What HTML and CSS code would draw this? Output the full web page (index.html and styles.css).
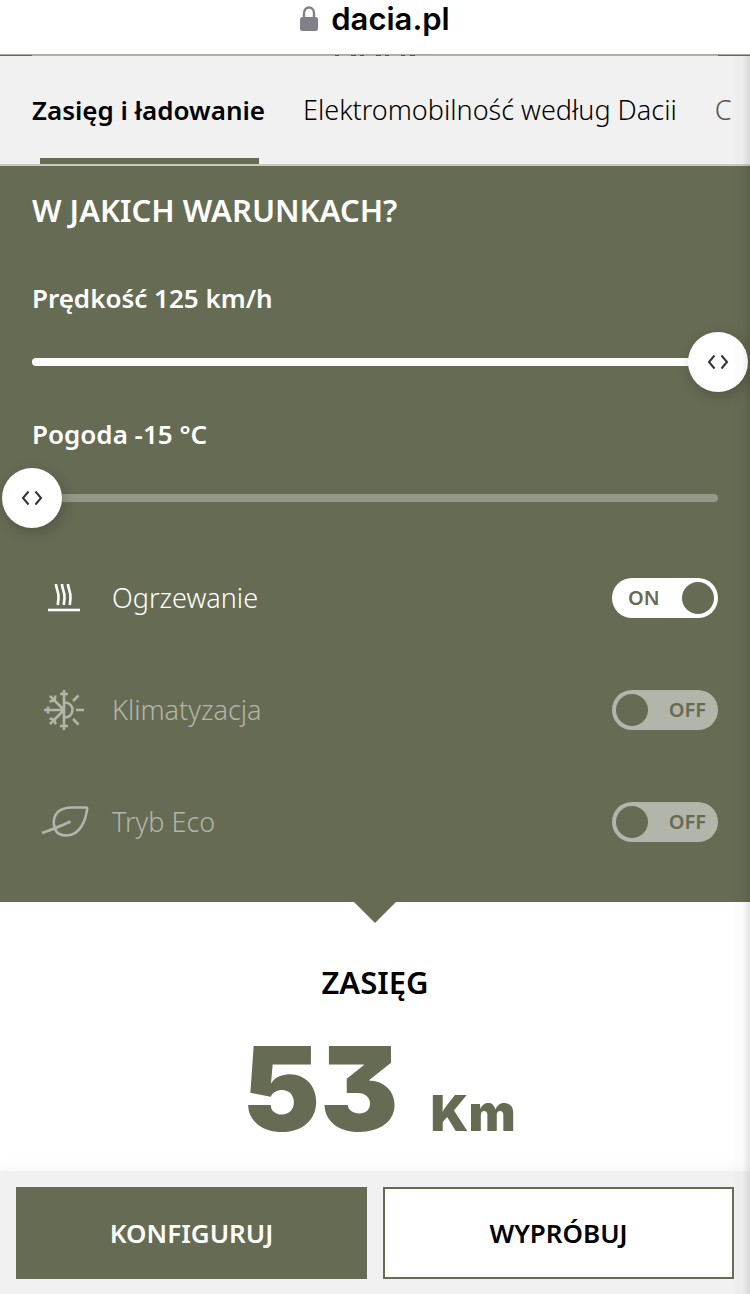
FILE: index.html
```html
<!DOCTYPE html>
<html lang="pl">
  <head>
    <meta charset="UTF-8" />
    <meta name="viewport" content="width=device-width, initial-scale=1.0" />
    <title>Dacia - Zasięg i ładowanie</title>
    <link rel="stylesheet" href="styles.css">
  </head>
  <body>
    <header class="address-bar">
      <svg class="lock" width="18" height="26" viewBox="0 0 18 26" aria-hidden="true">
        <path d="M4 13V7a5 5.500 0 0 1 10 0V13" fill="none" stroke="#818086" stroke-width="2.400" />
        <rect y="11" width="18" height="14" rx="2.500" fill="#818086" />
      </svg>
      <span>dacia.pl</span>
    </header>

    <div class="page-edge">
      <svg width="80" height="1" viewBox="0 0 80 1" aria-hidden="true">
        <path d="M0 .5h4M16 .5h5M25 .5h4M41 .5h5M50 .5h4M66 .5h4M75 .5h5" stroke="#55564e" />
      </svg>
    </div>

    <nav class="tabs">
      <a href="#zasieg" class="tab active">Zasięg i ładowanie</a>
      <a href="#elektromobilnosc" class="tab">Elektromobilność według Dacii</a>
      <a href="#c" class="tab faded">C</a>
    </nav>

    <main class="simulator" id="zasieg">
      <section class="conditions">
        <h2 class="title">W JAKICH WARUNKACH?</h2>

        <div class="field">
          <label for="speed">Prędkość 125 km/h</label>
          <div class="slider full">
            <input type="range" id="speed" min="0" max="125" value="125" />
          </div>
        </div>

        <div class="field">
          <label for="weather">Pogoda -15 °C</label>
          <div class="slider">
            <input type="range" id="weather" min="-15" max="35" value="-15" />
          </div>
        </div>

        <div class="options">
          <label class="option on">
            <svg class="icon" viewBox="0 0 64 64" aria-hidden="true">
              <path d="M24 18c0 5.500 3 7 2.500 14l-.7 7M30 18c0 5.500 3 7 2.500 14l-.7 7M36 18c0 5.500 3 7 2.500 14l-.7 7" />
              <path d="M16 44h32" />
            </svg>
            <span class="name">Ogrzewanie</span>
            <span class="switch">
              <input type="checkbox" checked />
              <span class="state">ON</span>
            </span>
          </label>

          <label class="option">
            <svg class="icon" viewBox="0 0 64 64" aria-hidden="true">
              <!-- snowflake half -->
              <path d="M32 12v40M12 32h20M18 18l14 14M18 46l14-14" />
              <path d="M28 16h8M28 48h8M16 28.500v7M17.500 23.500l5-1 1-5M17.500 40.500l5 1 1 5" />
              <!-- sun half -->
              <path d="M33 24.500a7.500 7.500 0 0 1 0 15M44 32h8M41 23l5.500-5.500M41 41l5.500 5.500" />
            </svg>
            <span class="name">Klimatyzacja</span>
            <span class="switch">
              <input type="checkbox" />
              <span class="state">OFF</span>
            </span>
          </label>

          <label class="option">
            <svg class="icon" viewBox="0 0 64 64" aria-hidden="true">
              <path d="M38.500 31.500C29 36 20 39.500 10 43" />
              <path d="M23 39c-3-9-1-21 16-21.500h15c.9 0 1.300.500 1.200 1.300C53.500 31 48 45 35 45.500c-6 0-10.500-2-12-6.500z" />
            </svg>
            <span class="name">Tryb Eco</span>
            <span class="switch">
              <input type="checkbox" />
              <span class="state">OFF</span>
            </span>
          </label>
        </div>
      </section>

      <section class="result">
        <h2 class="title">ZASIĘG</h2>
        <p class="range"><span class="value">53</span><span class="unit">Km</span></p>
      </section>
    </main>

    <footer class="actions">
      <button type="button" class="btn primary">KONFIGURUJ</button>
      <button type="button" class="btn">WYPRÓBUJ</button>
    </footer>
  </body>
</html>
```
FILE: styles.css
```css
* {
  box-sizing: border-box;
}

body {
  margin: 0;
  min-height: 100vh;
  display: flex;
  flex-direction: column;
  overflow-x: hidden;
  background: #fff;
  color: #000;
  font-family: "Noto Sans", "Open Sans", sans-serif;
  font-size: 27px;
  line-height: 40px;
}

/* shadow along the right side of the screen */
body::after {
  content: "";
  position: fixed;
  top: 56px;
  right: 0;
  bottom: 0;
  width: 18px;
  background: linear-gradient(to right, transparent, rgba(0, 0, 0, 0.02) 60%, rgba(0, 0, 0, 0.1));
  pointer-events: none;
}

.address-bar {
  display: flex;
  justify-content: center;
  align-items: center;
  gap: 13px;
  padding-bottom: 16px;
  border-bottom: 1px solid #a9a9a6;
  font-family: Inter, sans-serif;
  font-size: 31px;
  font-weight: 600;
  line-height: 38px;
}

.page-edge {
  display: flex;
  justify-content: center;
  height: 1px;
  background: linear-gradient(to right, #67645a 32px, #b0afa8 32px, #b0afa8 calc(100% - 32px), #67645a calc(100% - 32px));
}

.tabs {
  display: flex;
  gap: 38px;
  padding: 0 32px;
  background: #f1f1f1;
  border-bottom: 2px solid #c9cac2;
  white-space: nowrap;
  overflow: hidden;
}

.tab {
  padding: 34px 0 28px;
  color: #000;
  font-weight: 300;
  text-decoration: none;
}

.tab.active {
  font-size: 26px;
  font-weight: 600;
}

.tab.active::after {
  content: "";
  display: block;
  height: 6px;
  margin: 28px 6px -28px 8px;
  background: #666b54;
}

.tab.faded {
  color: #555;
}

.title {
  margin: 0;
  font-size: 31px;
  font-weight: 600;
}

.conditions {
  position: relative;
  padding: 24px 32px;
  background: #666b54;
  color: #fff;
}

.conditions::after {
  content: "";
  position: absolute;
  top: 100%;
  left: 50%;
  margin-left: -21px;
  border: 21px solid transparent;
  border-top-color: #666b54;
  border-bottom: 0;
}

.conditions .title {
  margin-bottom: 48px;
}

.field {
  font-size: 26px;
  font-weight: 600;
}

.field + .field {
  margin-top: 22px;
}

.field label {
  display: block;
  margin-bottom: 14px;
}

.slider {
  position: relative;
  height: 60px;
}

.slider::before {
  content: "";
  position: absolute;
  top: 26px;
  left: 0;
  right: 0;
  height: 8px;
  border-radius: 4px;
  background: #949887;
}

.slider.full::before {
  background: #fff;
}

/* the thumb centre has to reach both ends of the track */
.slider input {
  position: relative;
  display: block;
  width: calc(100% + 60px);
  height: 60px;
  margin: 0 -30px;
  appearance: none;
  background: transparent;
  cursor: pointer;
}

.slider input::-webkit-slider-thumb {
  appearance: none;
  width: 60px;
  height: 60px;
  border-radius: 50%;
  background: #fff url("data:image/svg+xml,%3Csvg xmlns='http://www.w3.org/2000/svg' width='22' height='16' fill='none' stroke='%23333' stroke-width='2'%3E%3Cpath d='M7.500 1.500L2 8l5.500 6.500M14.500 1.500L20 8l-5.500 6.500'/%3E%3C/svg%3E") center no-repeat;
  box-shadow: 2px 4px 14px rgba(0, 0, 0, 0.2);
}

.options {
  margin-top: 14px;
}

.option {
  display: flex;
  align-items: center;
  gap: 16px;
  height: 112px;
  color: #b2b5a9;
  font-weight: 300;
}

.option.on {
  color: #fff;
}

.icon {
  width: 64px;
  height: 64px;
  fill: none;
  stroke: currentColor;
  stroke-width: 2.6;
}

.name {
  flex: 1;
}

.switch {
  position: relative;
  display: flex;
  align-items: center;
  width: 106px;
  height: 40px;
}

.switch input {
  display: flex;
  align-items: center;
  width: 100%;
  height: 100%;
  margin: 0;
  padding: 4px;
  appearance: none;
  border-radius: 20px;
  background: #b2b5a9;
}

.switch input::before {
  content: "";
  width: 32px;
  height: 32px;
  border-radius: 50%;
  background: #666b54;
}

.switch input:checked {
  justify-content: flex-end;
  background: #fff;
}

.state {
  position: absolute;
  right: 12px;
  color: #666b54;
  font-size: 20px;
  font-weight: 600;
}

.on .state {
  right: auto;
  left: 16px;
}

.result {
  padding: 60px 32px 0;
  text-align: center;
}

.range {
  display: flex;
  justify-content: center;
  align-items: baseline;
  gap: 32px;
  margin: 27px 0 0;
  padding-left: 8px;
  color: #666b54;
  font-family: Inter, sans-serif;
  font-weight: 900;
}

.value {
  font-size: 117px;
  line-height: 120px;
  font-feature-settings: "cv09";
}

.unit {
  font-size: 50px;
}

.actions {
  display: flex;
  gap: 16px;
  margin-top: auto;
  padding: 16px 16px 15px;
  background: #f1f1f1;
  box-shadow: 0 0 16px rgba(0, 0, 0, 0.06);
}

.btn {
  flex: 1;
  height: 92px;
  border: 2px solid #666b54;
  background: #fff;
  color: #000;
  font: inherit;
  font-size: 26px;
  font-weight: 600;
  cursor: pointer;
}

.btn.primary {
  background: #666b54;
  color: #fff;
}
```
